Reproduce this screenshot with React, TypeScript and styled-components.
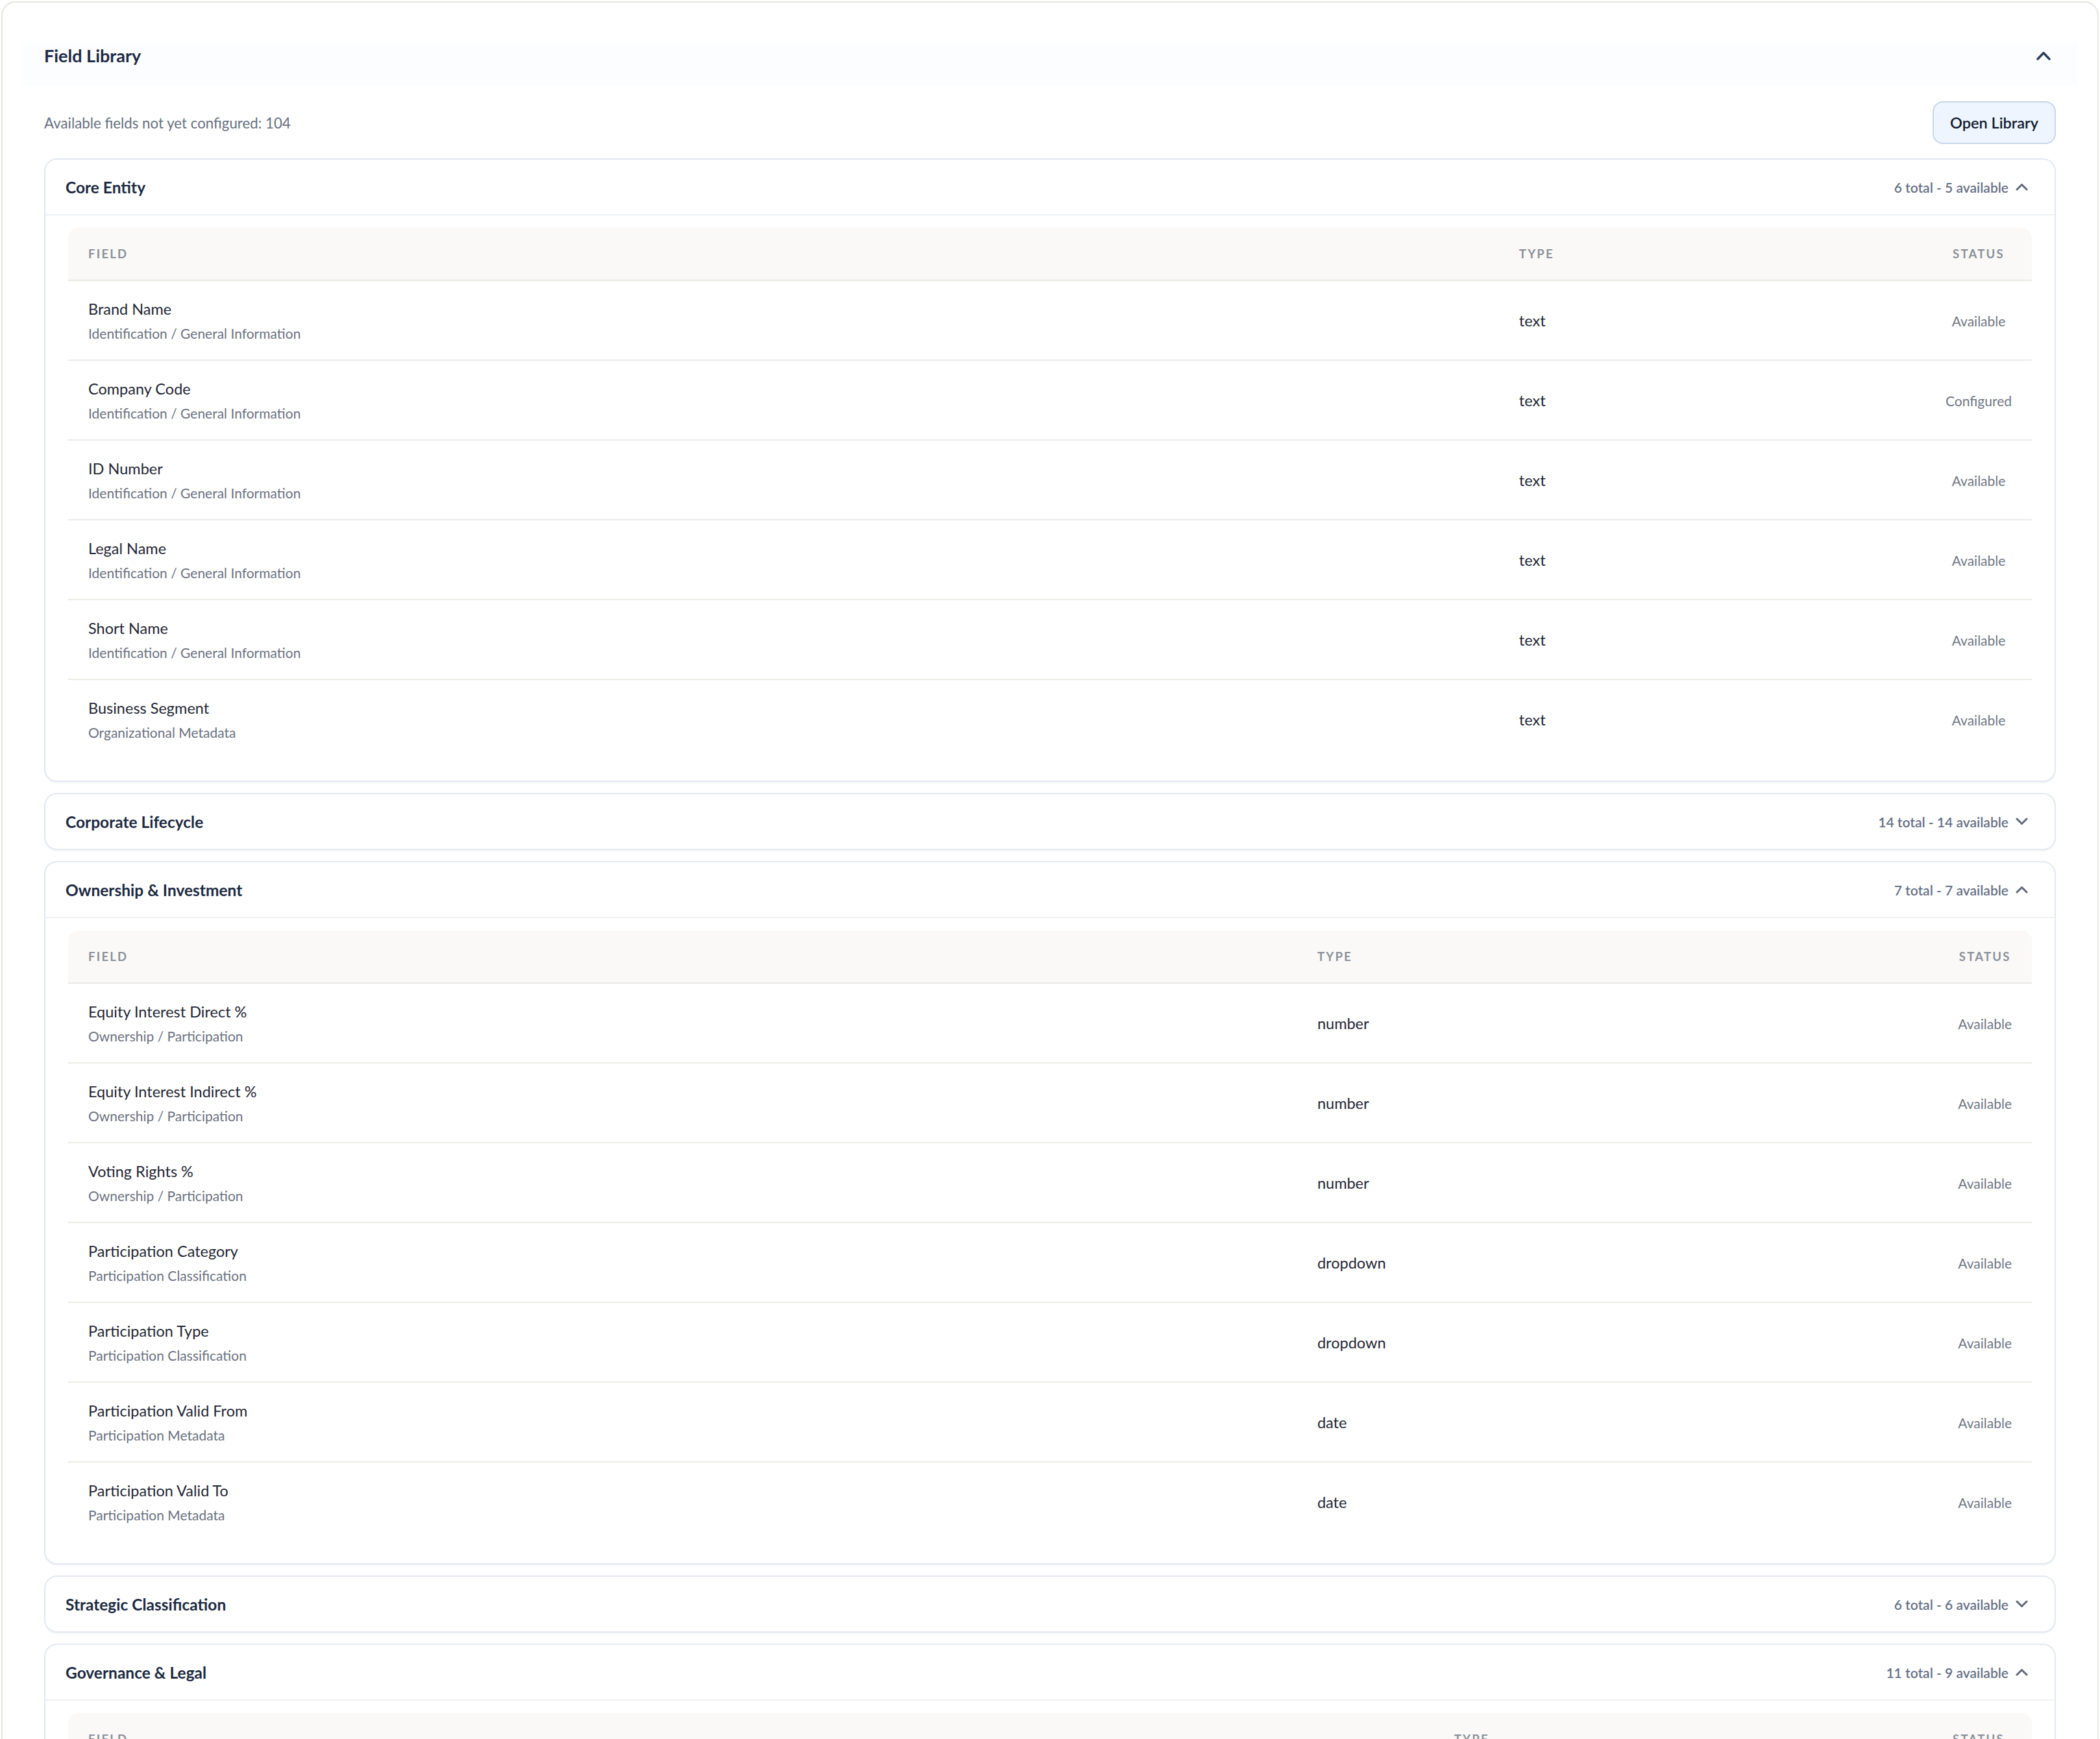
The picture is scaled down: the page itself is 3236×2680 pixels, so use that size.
import styled, { createGlobalStyle } from "styled-components";

type Status = "Available" | "Configured";

interface Field {
  name: string;
  group: string;
  type: string;
  status: Status;
}

interface Section {
  title: string;
  total: number;
  available: number;
  open: boolean;
  fields: Field[];
}

const ID = "Identification / General Information";
const OWN = "Ownership / Participation";
const REG = "Legal / Company Registration Details";

const sections: Section[] = [
  {
    title: "Core Entity",
    total: 6,
    available: 5,
    open: true,
    fields: [
      { name: "Brand Name", group: ID, type: "text", status: "Available" },
      { name: "Company Code", group: ID, type: "text", status: "Configured" },
      { name: "ID Number", group: ID, type: "text", status: "Available" },
      { name: "Legal Name", group: ID, type: "text", status: "Available" },
      { name: "Short Name", group: ID, type: "text", status: "Available" },
      { name: "Business Segment", group: "Organizational Metadata", type: "text", status: "Available" },
    ],
  },
  { title: "Corporate Lifecycle", total: 14, available: 14, open: false, fields: [] },
  {
    title: "Ownership & Investment",
    total: 7,
    available: 7,
    open: true,
    fields: [
      { name: "Equity Interest Direct %", group: OWN, type: "number", status: "Available" },
      { name: "Equity Interest Indirect %", group: OWN, type: "number", status: "Available" },
      { name: "Voting Rights %", group: OWN, type: "number", status: "Available" },
      { name: "Participation Category", group: "Participation Classification", type: "dropdown", status: "Available" },
      { name: "Participation Type", group: "Participation Classification", type: "dropdown", status: "Available" },
      { name: "Participation Valid From", group: "Participation Metadata", type: "date", status: "Available" },
      { name: "Participation Valid To", group: "Participation Metadata", type: "date", status: "Available" },
    ],
  },
  { title: "Strategic Classification", total: 6, available: 6, open: false, fields: [] },
  {
    title: "Governance & Legal",
    total: 11,
    available: 9,
    open: true,
    fields: [
      { name: "Board Structure", group: REG, type: "text", status: "Available" },
      { name: "Legal Form", group: REG, type: "text", status: "Configured" },
      { name: "Registered Office", group: REG, type: "text", status: "Available" },
      { name: "Registration Number", group: REG, type: "text", status: "Configured" },
      { name: "Date of Incorporation", group: REG, type: "date", status: "Available" },
      { name: "Listed Company", group: REG, type: "boolean", status: "Available" },
    ],
  },
];

const GlobalStyle = createGlobalStyle`
  html, body {
    margin: 0;
    background: #ffffff;
  }
  body {
    font-family: Lato, "Noto Sans", "Liberation Sans", sans-serif;
    color: #1f2937;
    -webkit-font-smoothing: antialiased;
  }
`;

const Page = styled.div`
  padding: 2px 2px 0;
`;

const Panel = styled.section`
  border: 2px solid #e6e4de;
  border-radius: 22px;
  background: #ffffff;
  padding-bottom: 40px;
`;

const PanelHeader = styled.header`
  display: flex;
  align-items: center;
  justify-content: space-between;
  margin: 0 31px;
  padding: 64px 41px 28px 33px;
  background: linear-gradient(180deg, #ffffff 0%, #ffffff 44%, #fcfdfe 50%, #fcfdfe 100%);
`;

const PanelTitle = styled.h2`
  margin: 0;
  font-size: 27px;
  line-height: 36px;
  font-weight: 700;
  color: #1e2b45;
`;

const PanelBody = styled.div`
  padding: 24px 64px 0;
  display: flex;
  flex-direction: column;
`;

const Toolbar = styled.div`
  display: flex;
  align-items: center;
  justify-content: space-between;
  margin-bottom: 22px;
`;

const Hint = styled.span`
  font-size: 22.3px;
  color: #667080;
`;

const OpenButton = styled.button`
  height: 66px;
  padding: 0 25px;
  border: 2px solid #c8d6ea;
  border-radius: 16px;
  background: #eff5fe;
  font-family: inherit;
  font-size: 23.5px;
  font-weight: 600;
  color: #0f1a2e;
  cursor: pointer;
`;

const SectionList = styled.div`
  display: flex;
  flex-direction: column;
  gap: 17px;
`;

const Card = styled.div`
  border: 2px solid #e3e8f1;
  border-radius: 20px;
  background: #ffffff;
  box-shadow: 0 2px 2px rgba(30, 50, 90, 0.05);
  overflow: hidden;
`;

const CardHeader = styled.div<{ $open: boolean }>`
  display: flex;
  align-items: center;
  justify-content: space-between;
  height: 84px;
  padding: 0 41px 0 31px;
  border-bottom: ${(p) => (p.$open ? "2px solid #eef1f5" : "none")};
`;

const CardTitle = styled.h3`
  margin: 0;
  font-size: 24.5px;
  font-weight: 700;
  color: #1b2940;
`;

const Count = styled.div`
  display: flex;
  align-items: center;
  gap: 11px;
  font-size: 21px;
  font-weight: 600;
  color: #667085;
`;

const CardBody = styled.div`
  padding: 19px 35px 34px;
`;

const Table = styled.table`
  width: 100%;
  border-collapse: collapse;
`;

const HeadCell = styled.th<{ $align?: "left" | "center" }>`
  height: 80px;
  padding: 0 31px;
  background: #faf9f7;
  border-bottom: 2px solid #ebe8e3;
  text-align: ${(p) => p.$align ?? "left"};
  font-size: 18.5px;
  font-weight: 700;
  letter-spacing: 0.12em;
  text-transform: uppercase;
  color: #8a9099;
  &:first-child {
    border-top-left-radius: 16px;
  }
  &:last-child {
    border-top-right-radius: 16px;
    width: 1%;
    white-space: nowrap;
  }
`;

const Row = styled.tr`
  border-bottom: 2px solid #ecebe6;
  &:last-child {
    border-bottom: none;
  }
`;

const Cell = styled.td`
  padding: 27px 31px 26px;
  vertical-align: middle;
`;

const FieldName = styled.div`
  font-size: 23.5px;
  line-height: 32px;
  color: #1f2633;
`;

const FieldGroup = styled.div`
  margin-top: 8px;
  font-size: 21px;
  line-height: 28px;
  color: #6b7280;
`;

const TypeText = styled.span`
  font-size: 23.5px;
  color: #1f2633;
`;

const StatusCell = styled(Cell)`
  text-align: center;
  white-space: nowrap;
  font-size: 21px;
  color: #6f7683;
`;

const Chevron = ({ up, size }: { up: boolean; size: "lg" | "sm" }) => {
  const w = size === "lg" ? 22 : 19;
  const h = size === "lg" ? 14 : 12;
  const d = up
    ? `M2 ${h - 2} L${w / 2} 2.5 L${w - 2} ${h - 2}`
    : `M2 2 L${w / 2} ${h - 2.5} L${w - 2} 2`;
  return (
    <svg width={w} height={h} viewBox={`0 0 ${w} ${h}`} fill="none">
      <path
        d={d}
        stroke={size === "lg" ? "#2b3b58" : "#5f6878"}
        strokeWidth={size === "lg" ? 3.4 : 3}
        strokeLinecap="round"
        strokeLinejoin="round"
      />
    </svg>
  );
};

const FieldSection = ({ section }: { section: Section }) => (
  <Card>
    <CardHeader $open={section.open}>
      <CardTitle>{section.title}</CardTitle>
      <Count>
        {section.total} total - {section.available} available
        <Chevron up={section.open} size="sm" />
      </Count>
    </CardHeader>
    {section.open && (
      <CardBody>
        <Table>
          <thead>
            <tr>
              <HeadCell>Field</HeadCell>
              <HeadCell>Type</HeadCell>
              <HeadCell $align="center">Status</HeadCell>
            </tr>
          </thead>
          <tbody>
            {section.fields.map((f) => (
              <Row key={f.name}>
                <Cell>
                  <FieldName>{f.name}</FieldName>
                  <FieldGroup>{f.group}</FieldGroup>
                </Cell>
                <Cell>
                  <TypeText>{f.type}</TypeText>
                </Cell>
                <StatusCell>{f.status}</StatusCell>
              </Row>
            ))}
          </tbody>
        </Table>
      </CardBody>
    )}
  </Card>
);

export default function App() {
  return (
    <Page>
      <GlobalStyle />
      <Panel>
        <PanelHeader>
          <PanelTitle>Field Library</PanelTitle>
          <Chevron up size="lg" />
        </PanelHeader>
        <PanelBody>
          <Toolbar>
            <Hint>Available fields not yet configured: 104</Hint>
            <OpenButton>Open Library</OpenButton>
          </Toolbar>
          <SectionList>
            {sections.map((s) => (
              <FieldSection key={s.title} section={s} />
            ))}
          </SectionList>
        </PanelBody>
      </Panel>
    </Page>
  );
}
